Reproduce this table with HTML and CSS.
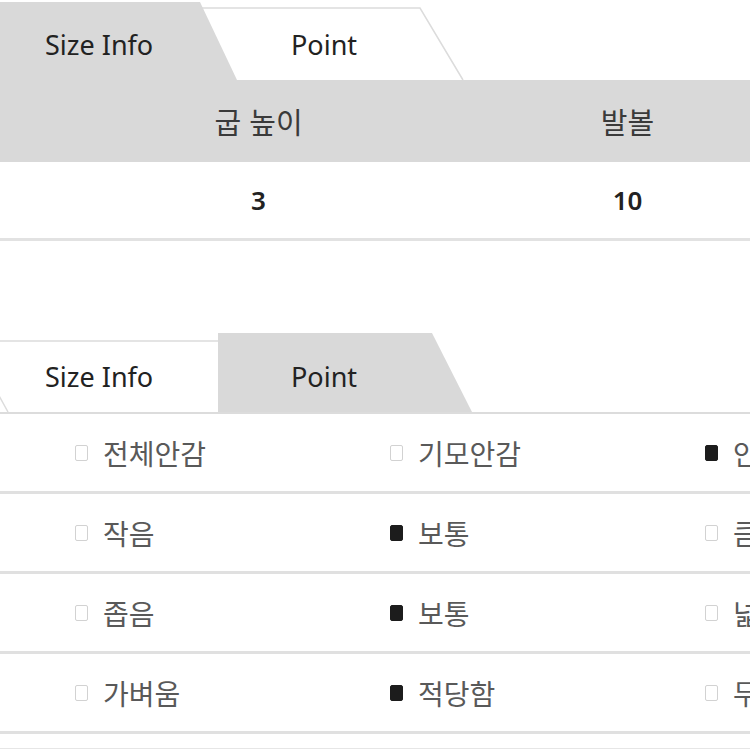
FILE: index.html
```html
<!DOCTYPE html>
<html lang="ko">
<head>
<meta charset="utf-8">
<title>Size Info / Point</title>
<link rel="stylesheet" href="styles.css">
</head>
<body>
<div class="page">
  <section class="block size-block">
    <div class="tabs">
      <div class="tab tab-gray tab-size-a"><span class="tab-label">Size Info</span></div>
      <div class="tab tab-white tab-point-a">
        <svg class="tab-shape" width="263" height="80" viewBox="0 0 263 80">
          <polygon points="0,8 220,8 263,80 0,80" fill="#ffffff"/>
          <polyline points="0,8 220,8 263,80" fill="none" stroke="#dcdcdc" stroke-width="1.5"/>
        </svg>
        <span class="tab-label">Point</span>
      </div>
    </div>
    <div class="size-table">
      <div class="size-row size-head">
        <div class="size-cell">굽 높이</div>
        <div class="size-cell">발볼</div>
      </div>
      <div class="size-row size-data">
        <div class="size-cell">3</div>
        <div class="size-cell">10</div>
      </div>
    </div>
  </section>

  <section class="block point-block">
    <div class="tabs tabs-b">
      <div class="tab tab-white tab-size-b">
        <svg class="tab-shape" width="218" height="79" viewBox="0 0 218 79">
          <polygon points="-31,8 218,8 218,79 8,79" fill="#ffffff"/>
          <polyline points="8,79 -31,8 218,8" fill="none" stroke="#dcdcdc" stroke-width="1.5"/>
        </svg>
        <span class="tab-label">Size Info</span>
      </div>
      <div class="tab tab-gray tab-point-b"><span class="tab-label">Point</span></div>
    </div>
    <div class="point-table">
      <div class="point-row">
        <div class="opt"><span class="box"></span><span class="opt-text">전체안감</span></div>
        <div class="opt"><span class="box"></span><span class="opt-text">기모안감</span></div>
        <div class="opt"><span class="box on"></span><span class="opt-text">안감없음</span></div>
      </div>
      <div class="point-row">
        <div class="opt"><span class="box"></span><span class="opt-text">작음</span></div>
        <div class="opt"><span class="box on"></span><span class="opt-text">보통</span></div>
        <div class="opt"><span class="box"></span><span class="opt-text">큼</span></div>
      </div>
      <div class="point-row">
        <div class="opt"><span class="box"></span><span class="opt-text">좁음</span></div>
        <div class="opt"><span class="box on"></span><span class="opt-text">보통</span></div>
        <div class="opt"><span class="box"></span><span class="opt-text">넓음</span></div>
      </div>
      <div class="point-row">
        <div class="opt"><span class="box"></span><span class="opt-text">가벼움</span></div>
        <div class="opt"><span class="box on"></span><span class="opt-text">적당함</span></div>
        <div class="opt"><span class="box"></span><span class="opt-text">무거움</span></div>
      </div>
      <div class="point-end"></div>
    </div>
  </section>
</div>
</body>
</html>
```

FILE: styles.css
```css
html, body {
  margin: 0;
  padding: 0;
  background: #ffffff;
}
.page {
  width: 750px;
  height: 750px;
  overflow: hidden;
  font-family: "Noto Sans", "Noto Sans CJK KR", sans-serif;
  color: #222;
}
.block {
  display: flex;
  flex-direction: column;
}
.point-block {
  margin-top: 92px;
}

/* tabs */
.tabs {
  display: flex;
  height: 80px;
}
.tabs-b {
  height: 79px;
}
.tab {
  position: relative;
  display: flex;
  align-items: center;
  padding-top: 8px;
  box-sizing: border-box;
  font-size: 27px;
  color: #222;
}
.tab-shape {
  position: absolute;
  left: 0;
  top: 0;
  overflow: visible;
}
.tab-label {
  position: relative;
  line-height: 1;
}
.tab-gray {
  background: #d9d9d9;
  z-index: 2;
}
.tab-size-a {
  width: 237px;
  padding-left: 45px;
  clip-path: polygon(0 2px, 200px 2px, 237px 100%, 0 100%);
}
.tab-point-a {
  width: 263px;
  margin-left: -37px;
  padding-left: 91px;
  z-index: 1;
}
.tab-size-b {
  width: 218px;
  padding-left: 45px;
  z-index: 1;
}
.tab-point-b {
  width: 254px;
  padding-left: 73px;
  clip-path: polygon(0 0, 214px 0, 254px 100%, 0 100%);
}

/* size table */
.size-row {
  display: grid;
  grid-template-columns: 369px 369px;
  padding-left: 74px;
  align-items: center;
}
.size-cell {
  text-align: center;
  line-height: 1;
}
.size-head {
  height: 82px;
  background: #d9d9d9;
  font-family: "Noto Sans CJK KR", "Noto Sans", sans-serif;
  font-size: 29px;
  color: #3a3a3a;
}
.size-data {
  height: 76px;
  border-bottom: 3px solid #e2e2e2;
  font-size: 26px;
  font-weight: 600;
  color: #222;
}

/* point table */
.point-table {
  border-top: 2px solid #dcdcdc;
}
.point-row {
  display: grid;
  grid-template-columns: 315px 315px 315px;
  padding-left: 75px;
  height: 77px;
  align-items: center;
  border-bottom: 3px solid #e0e0e0;
}
.opt {
  display: flex;
  align-items: center;
  gap: 15px;
  white-space: nowrap;
}
.box {
  width: 11px;
  height: 14px;
  border: 1px solid #d2d2d2;
  border-radius: 2px;
  background: #ffffff;
  flex: none;
}
.box.on {
  background: #1c1c1c;
  border-color: #1c1c1c;
}
.opt-text {
  font-family: "Noto Sans CJK KR", sans-serif;
  font-size: 28px;
  line-height: 1;
  color: #595959;
}
.point-end {
  height: 14px;
  border-bottom: 1px solid #e6e6e6;
}
```
